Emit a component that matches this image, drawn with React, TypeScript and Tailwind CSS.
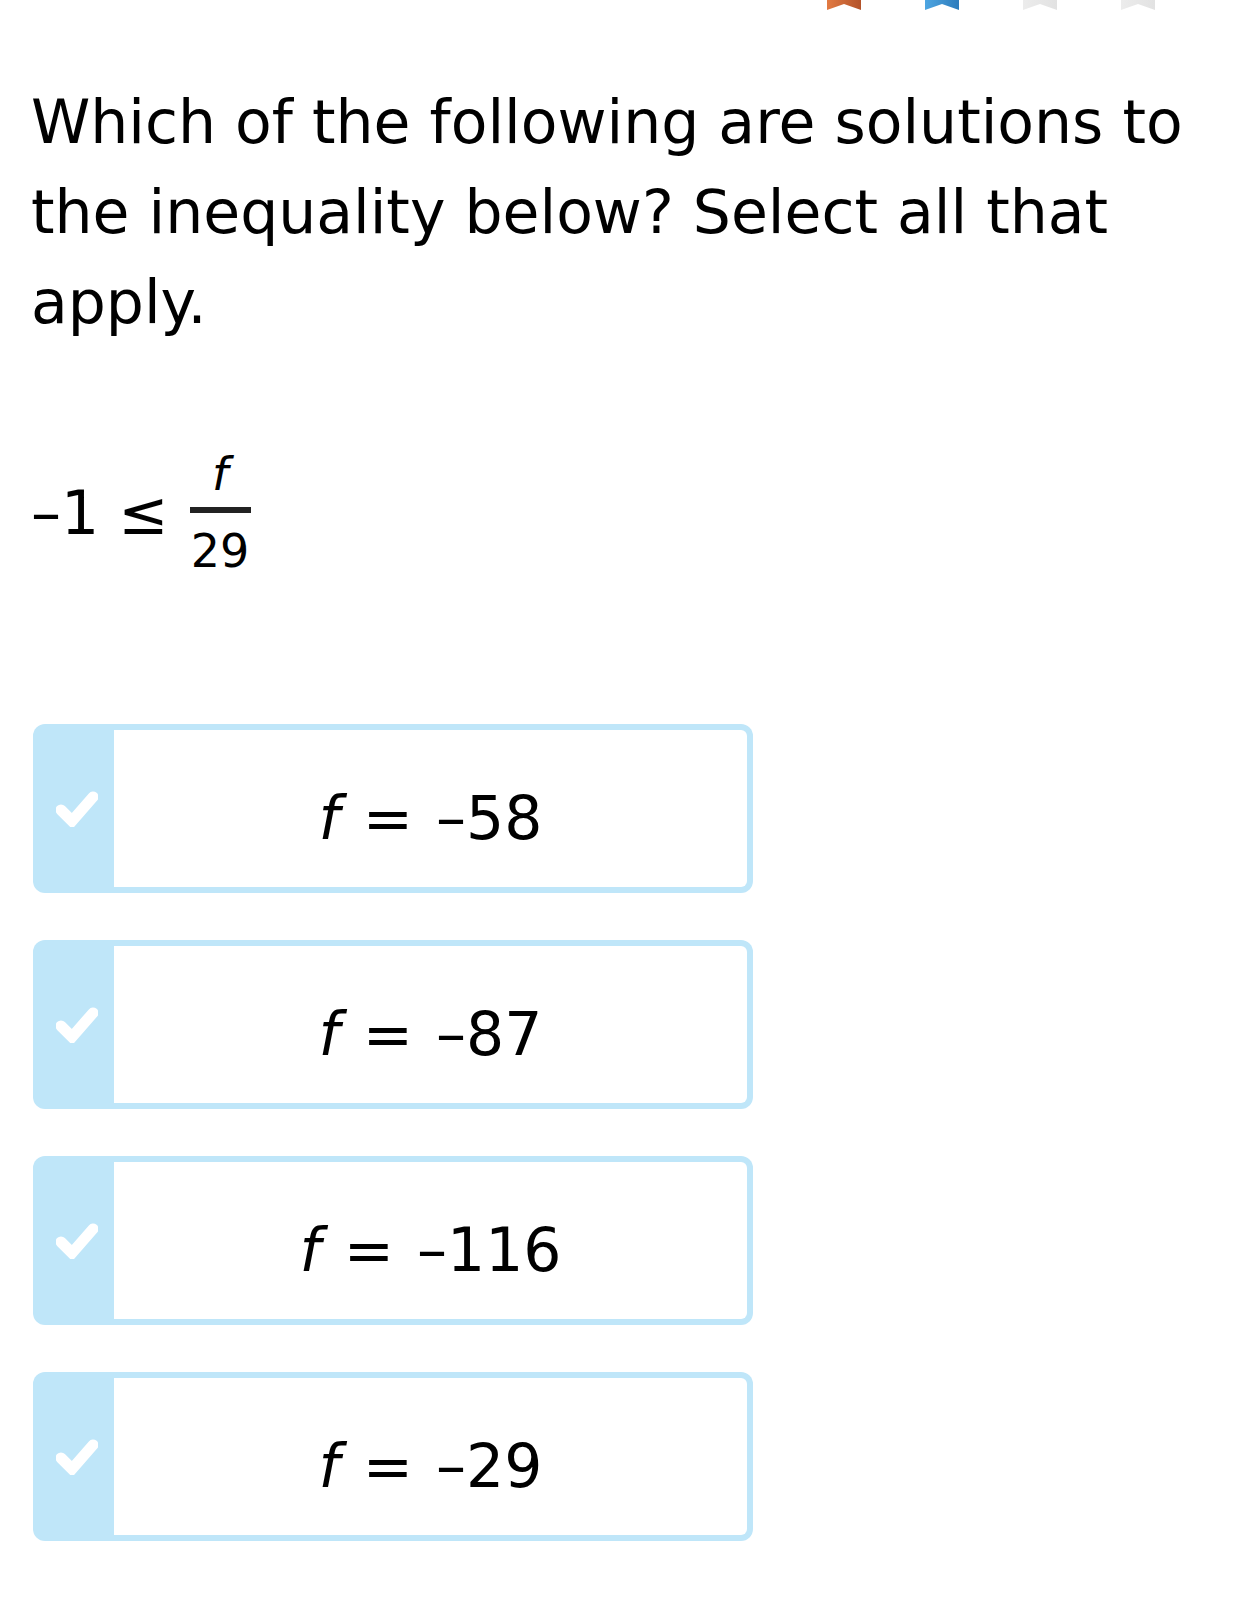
import { useState } from "react";

const ribbons = [
  { id: "r1", from: "#e27a42", to: "#b3532a" },
  { id: "r2", from: "#4ea6e2", to: "#2d7cbc" },
  { id: "r3", from: "#ececec", to: "#e2e2e2" },
  { id: "r4", from: "#ececec", to: "#e2e2e2" },
];

const answers = ["58", "87", "116", "29"];

function Ribbon({ id, from, to }: { id: string; from: string; to: string }) {
  return (
    <svg width="34" height="10" viewBox="0 0 34 10">
      <defs>
        <linearGradient id={id} x1="0" y1="0" x2="1" y2="0">
          <stop offset="0" stopColor={from} />
          <stop offset="1" stopColor={to} />
        </linearGradient>
      </defs>
      <polygon points="0,0 34,0 34,10 17,4 0,10" fill={`url(#${id})`} />
    </svg>
  );
}

function Check() {
  return (
    <svg width="42" height="36" viewBox="0 0 42 36">
      <polyline
        points="5,19 16,30 37,6"
        fill="none"
        stroke="white"
        strokeWidth="11"
        strokeLinejoin="miter"
        strokeLinecap="round"
      />
    </svg>
  );
}

export default function App() {
  const [selected, setSelected] = useState<string[]>([]);

  function toggle(value: string) {
    setSelected((prev) =>
      prev.includes(value) ? prev.filter((v) => v !== value) : [...prev, value]
    );
  }

  return (
    <div className="min-h-[1615px] w-full bg-white text-black font-['DejaVu_Sans','Liberation_Sans',sans-serif]">
      <div className="flex h-[15px] gap-[64px] pl-[827px]">
        {ribbons.map((r) => (
          <Ribbon key={r.id} {...r} />
        ))}
      </div>

      <p className="mt-[62px] w-[1200px] pl-[31px] text-[60px] leading-[90px]">
        Which of the following are solutions to the inequality below? Select
        all that apply.
      </p>

      <div className="mt-[104px] flex items-center pl-[31px]">
        <span className="text-[60px] leading-[60px]">–1 ≤</span>
        <div className="ml-[21px] flex w-[61px] flex-col items-center">
          <span className="text-[46px] italic leading-[46px]">f</span>
          <div className="mt-[10px] h-[6px] w-full bg-[#222]" />
          <span className="mt-[15px] text-[46px] leading-[46px]">29</span>
        </div>
      </div>

      <div className="mt-[150px] flex w-[720px] flex-col gap-[47px] ml-[33px]">
        {answers.map((a) => (
          <button
            key={a}
            type="button"
            onClick={() => toggle(a)}
            className="flex h-[169px] rounded-[12px] bg-[#bfe6f9] p-[6px] pl-0 text-left"
          >
            <div className="flex w-[81px] shrink-0 items-center justify-center pl-[6px]">
              <Check />
            </div>
            <div
              className={
                selected.includes(a)
                  ? "flex flex-1 items-center justify-center rounded-r-[6px] bg-[#eef8fd] pt-[18px]"
                  : "flex flex-1 items-center justify-center rounded-r-[6px] bg-white pt-[18px]"
              }
            >
              <span className="text-[60px] leading-[60px] whitespace-pre [word-spacing:4px]">
                <i>f</i> = –{a}
              </span>
            </div>
          </button>
        ))}
      </div>
    </div>
  );
}
